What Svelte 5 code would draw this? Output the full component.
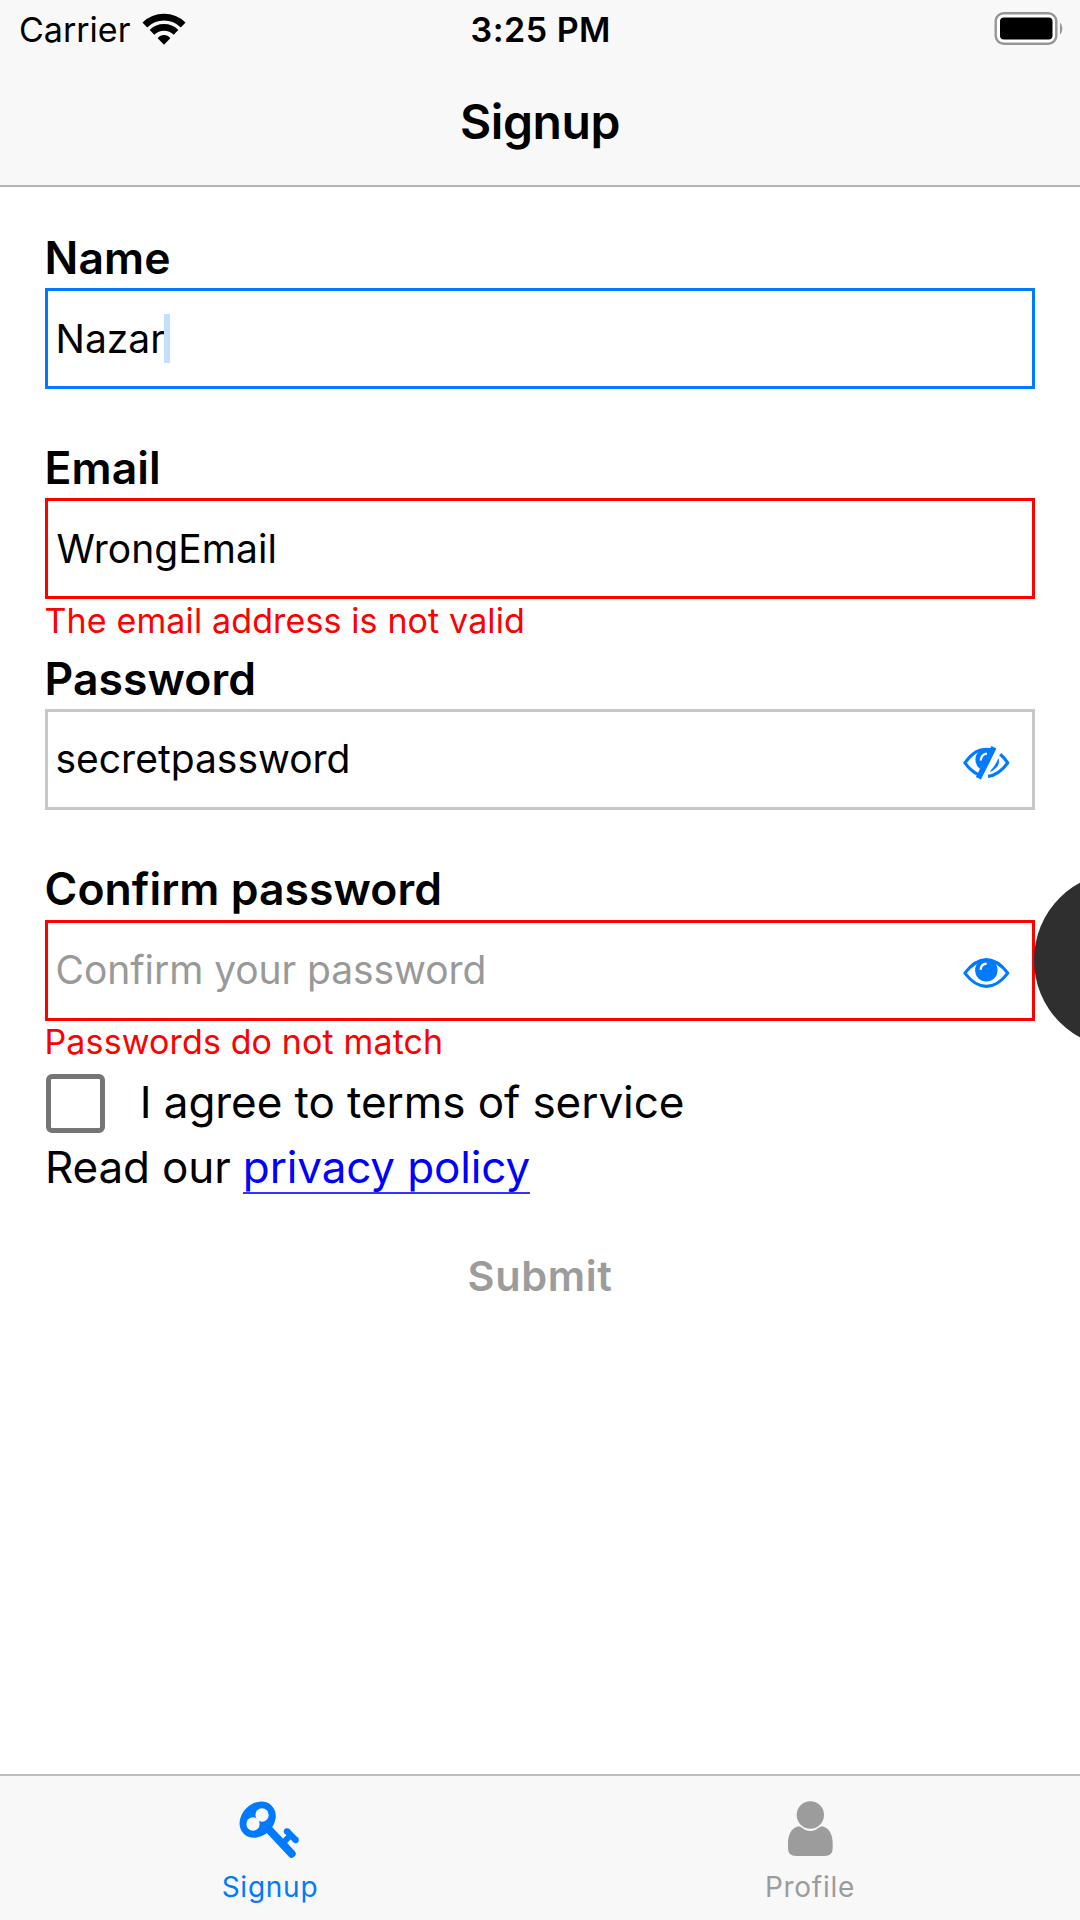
<script>
  const fields = [
    { label: 'Name', value: 'Nazar', state: 'focused', caret: true },
    { label: 'Email', value: 'WrongEmail', state: 'invalid', error: 'The email address is not valid' },
    { label: 'Password', value: 'secretpassword', state: 'idle', icon: 'eye-off' },
    { label: 'Confirm password', placeholder: 'Confirm your password', state: 'invalid', icon: 'eye', error: 'Passwords do not match' }
  ];
</script>

<div class="screen">
  <header>
    <div class="status">
      <div class="carrier">
        <span>Carrier</span>
        <svg class="wifi" viewBox="0 0 138 102" aria-hidden="true">
          <g fill="none" stroke="#000">
            <path d="M11.5 39 A82 82 0 0 1 126.500 39" stroke-width="20" />
            <path d="M33 61 A51 51 0 0 1 105 61" stroke-width="20" />
          </g>
          <path d="M69 98 L50 79 Q58 69 69 69 Q80 69 88 79 Z" />
        </svg>
      </div>
      <div class="time">3:25 PM</div>
      <div class="power">
        <svg class="battery" viewBox="0 0 70 34" aria-hidden="true">
          <rect x="1.2" y="1.2" width="60.600" height="30.600" rx="8" fill="#fff" stroke="#969696" stroke-width="2.400" />
          <rect x="5.500" y="5.500" width="52.500" height="22" rx="4" />
          <path d="M66 11.500 Q69 16.500 66 22 Z" fill="#969696" stroke="#969696" stroke-width="1" />
        </svg>
      </div>
    </div>
    <h1>Signup</h1>
  </header>

  <main>
    {#each fields as f}
      <div class="field">
        <div class="label">{f.label}</div>
        <div class="input {f.state}">
          <div class="text">
            {#if f.value}<span>{f.value}</span>{:else}<span class="placeholder">{f.placeholder}</span>{/if}
            {#if f.caret}<i class="caret"></i>{/if}
          </div>
          {#if f.icon === 'eye'}
            <svg class="eye" viewBox="0 0 150 115" aria-hidden="true">
              <path d="M8 58 C30 29 50 17 73 17 S116 29 138 58 C116 87 96 98 73 98 S30 87 8 58Z" fill="none" stroke="#007aff" stroke-width="9.500" stroke-linejoin="round" />
              <circle cx="73" cy="49" r="34" fill="#007aff" />
              <path d="M56 48 Q56 30 74 29" fill="none" stroke="#fff" stroke-width="7" />
            </svg>
          {:else if f.icon === 'eye-off'}
            <svg class="eye" viewBox="0 0 150 115" aria-hidden="true">
              <g fill="none" stroke="#007aff" stroke-width="9.500" stroke-linejoin="round" stroke-linecap="round">
                <path d="M86 17 C50 11 30 27 8 57 C20 73 31 84 46 91" />
                <path d="M115 31 Q127 41 138 57 C119 83 102 95 78 98" stroke-linecap="butt" />
              </g>
              <path d="M90 15 C60 10 41 24 40 46 Q40 65 54 76 Z" fill="#007aff" />
              <path d="M56 50 Q57 31 75 29" fill="none" stroke="#fff" stroke-width="7" />
              <path d="M96 10 L49 104" stroke="#007aff" stroke-width="17" />
              <path d="M110 45 Q114 71 85 83 Q101 66 110 45Z" fill="#007aff" stroke="#007aff" stroke-width="2" />
            </svg>
          {/if}
        </div>
        {#if f.error}<div class="error">{f.error}</div>{/if}
      </div>
    {/each}

    <div class="terms">
      <span class="box"></span>
      <span class="terms-text">I agree to terms of service</span>
    </div>
    <p class="policy">Read our <a href="#policy">privacy policy</a></p>
    <div class="submit">Submit</div>
  </main>

  <nav>
    <div class="tab active">
      <svg class="key" viewBox="0 0 185 180" aria-hidden="true">
        <g fill="#007aff">
          <ellipse cx="59" cy="62" rx="59.500" ry="48.500" transform="rotate(-45 59 62)" />
          <path d="M88 86 L161 164" stroke="#007aff" stroke-width="24" stroke-linecap="round" />
          <path d="M134 133 L158 108" stroke="#007aff" stroke-width="18" />
          <path d="M147 97 L172 122" stroke="#007aff" stroke-width="19" stroke-linejoin="round" />
          <circle cx="147" cy="97" r="9.500" /><circle cx="173" cy="123" r="9.500" />
        </g>
        <circle cx="72" cy="48" r="20" fill="#f8f8f8" />
        <circle cx="45" cy="75" r="20" fill="#f8f8f8" />
      </svg>
      <span>Signup</span>
    </div>
    <div class="tab">
      <svg class="person" viewBox="0 0 140 180" aria-hidden="true">
        <g fill="#9c9c9c">
          <circle cx="70" cy="48" r="41" />
          <path d="M34 82 C44 82 50 96 70 96 S96 82 106 82 C128 87 137 110 137 133 V147 Q137 171 113 171 H27 Q3 171 3 147 V133 C3 110 12 87 34 82Z" />
        </g>
      </svg>
      <span>Profile</span>
    </div>
  </nav>

  <div class="bubble"></div>
</div>

<style>
  :global(body) { margin: 0; background: #fff; }
  .screen {
    position: relative; box-sizing: border-box; width: 1080px; height: 1920px; overflow: hidden;
    display: flex; flex-direction: column; background: #fff; color: #000;
    font-family: Inter, "Liberation Sans", sans-serif;
  }
  header { box-sizing: border-box; height: 187px; background: #f8f8f8; border-bottom: 2px solid #b4b4b4; }
  .status {
    display: grid; grid-template-columns: 1fr auto 1fr; align-items: center;
    height: 59px; font-size: 34px; line-height: 59px;
  }
  .carrier { display: flex; align-items: center; gap: 11px; padding-left: 19px; }
  .wifi { width: 46px; height: 34px; margin-top: -1px; }
  .time { font-weight: 600; letter-spacing: 0.500px; padding-left: 1.500px; }
  .power { display: flex; justify-content: flex-end; padding: 0 15px 2px 0; }
  .battery { width: 71px; height: 34px; }
  h1 {
    margin: 0; font-size: 48px; font-weight: 600; letter-spacing: -0.410px;
    text-align: center; line-height: 60px; padding-top: 33px;
  }
  main { flex: 1; padding: 42px 45px 0; }
  .field { height: 210.250px; }
  .label { font-size: 44.500px; font-weight: 600; line-height: 59px; letter-spacing: 0.050px; margin-left: -0.400px; }
  .input {
    box-sizing: border-box; height: 101px; border: 3px solid #c7c7cc; padding: 0 20px 0 7.500px;
    display: flex; align-items: center; justify-content: space-between; font-size: 39px;
  }
  .focused { border-color: #007aff; }
  .invalid { border-color: #f00; }
  .text { display: flex; align-items: center; line-height: 48px; }
  .field:nth-child(2) .text { padding-left: 1px; letter-spacing: 0.050px; }
  .placeholder { color: #999; letter-spacing: -0.070px; }
  .caret { width: 6px; height: 49px; margin: -1px 0 0 -1px; background: #c2dffd; }
  .eye { width: 50px; height: 38px; margin-top: 7px; }
  .error { font-size: 34px; line-height: 43px; color: #f00; letter-spacing: 0.130px; margin-left: -0.500px; }
  .field:nth-child(4) .input { margin: 1.500px 0 -1.500px; padding-bottom: 2px; }
  .terms { display: flex; align-items: center; height: 59px; padding-top: 4px; font-size: 44px; }
  .box {
    box-sizing: border-box; width: 59px; height: 59px; margin-left: 1px;
    border: 5.500px solid #757575; border-radius: 6px;
  }
  .terms-text { padding: 0 0 3px 34.700px; letter-spacing: -0.070px; }
  .policy { margin: 4px 0 0; font-size: 44px; line-height: 60px; letter-spacing: -0.140px; }
  a {
    color: #00f; text-decoration: none;
    background: linear-gradient(#3333ff, #3333ff) 0 100% / 100% 2px no-repeat;
  }
  .submit {
    margin-top: 54px; text-align: center; font-size: 41.500px; font-weight: 600;
    line-height: 50px; letter-spacing: 0.600px; color: #9c9c9c;
  }
  nav {
    box-sizing: border-box; height: 146px; border-top: 2px solid #bdbdbd; background: #f8f8f8;
    display: flex;
  }
  .tab {
    flex: 1; display: flex; flex-direction: column; align-items: center; padding-top: 22.800px;
    color: #9c9c9c; font-size: 28px; line-height: 34px; letter-spacing: 0.750px;
  }
  .tab span { margin-top: 11px; }
  .active { color: #007aff; }
  .key { width: 61.700px; height: 60px; margin-right: 1.600px; }
  .person { width: 46.700px; height: 60px; }
  .bubble {
    position: absolute; left: 1033.700px; top: 872px; width: 176px; height: 176px;
    border-radius: 50%; background: #2f2f2f;
  }
</style>
